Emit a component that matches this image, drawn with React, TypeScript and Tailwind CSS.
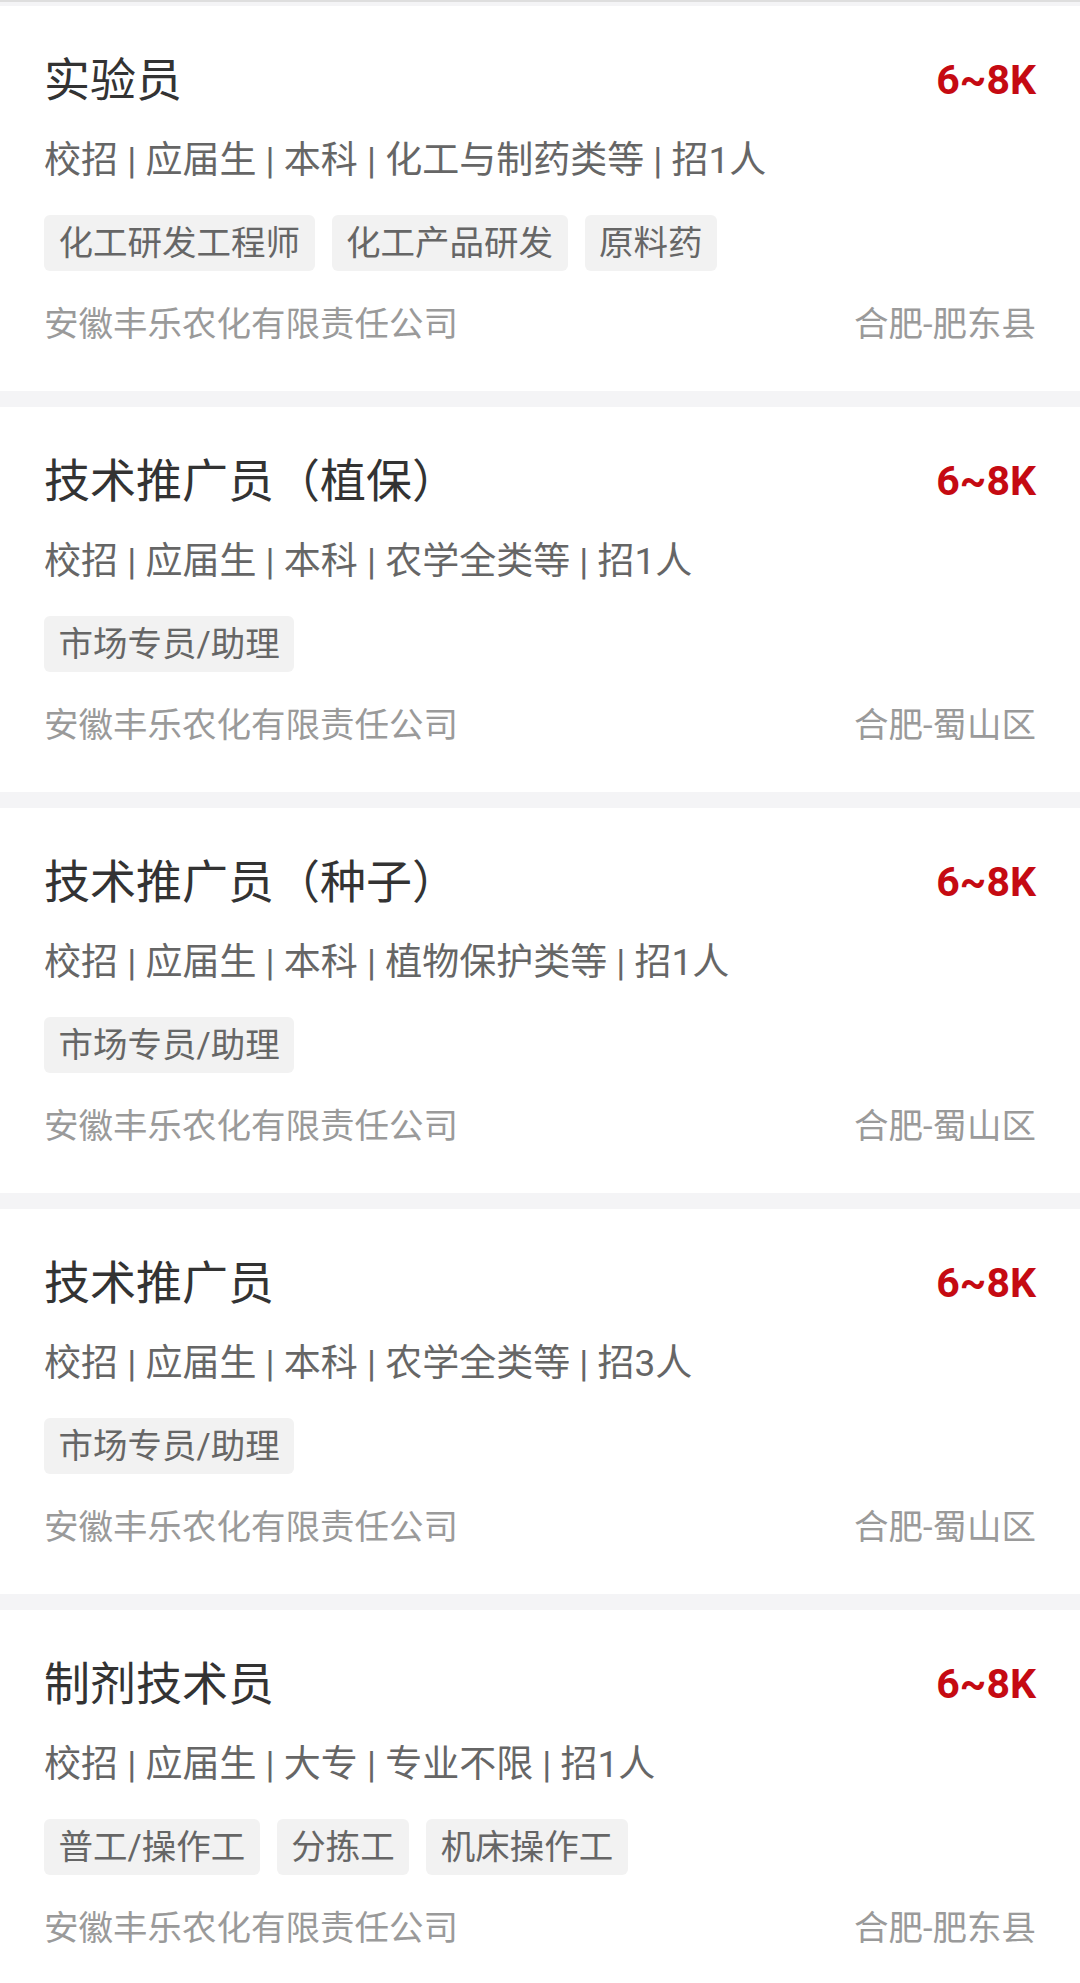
const jobs = [
  {
    title: "实验员",
    salary: "6~8K",
    meta: ["校招", "应届生", "本科", "化工与制药类等", "招1人"],
    tags: ["化工研发工程师", "化工产品研发", "原料药"],
    company: "安徽丰乐农化有限责任公司",
    location: "合肥-肥东县",
  },
  {
    title: "技术推广员（植保）",
    salary: "6~8K",
    meta: ["校招", "应届生", "本科", "农学全类等", "招1人"],
    tags: ["市场专员/助理"],
    company: "安徽丰乐农化有限责任公司",
    location: "合肥-蜀山区",
  },
  {
    title: "技术推广员（种子）",
    salary: "6~8K",
    meta: ["校招", "应届生", "本科", "植物保护类等", "招1人"],
    tags: ["市场专员/助理"],
    company: "安徽丰乐农化有限责任公司",
    location: "合肥-蜀山区",
  },
  {
    title: "技术推广员",
    salary: "6~8K",
    meta: ["校招", "应届生", "本科", "农学全类等", "招3人"],
    tags: ["市场专员/助理"],
    company: "安徽丰乐农化有限责任公司",
    location: "合肥-蜀山区",
  },
  {
    title: "制剂技术员",
    salary: "6~8K",
    meta: ["校招", "应届生", "大专", "专业不限", "招1人"],
    tags: ["普工/操作工", "分拣工", "机床操作工"],
    company: "安徽丰乐农化有限责任公司",
    location: "合肥-肥东县",
  },
];

const JobCard = ({ job }: { job: (typeof jobs)[number] }) => {
  return (
    <div className="bg-white px-[44px] pt-[44px] pb-[43px]">
      <div className="flex h-[60px] items-center justify-between">
        <h2 className="text-[46px] leading-[60px] font-normal text-[#333333]">
          {job.title}
        </h2>
        <span className="text-[41px] leading-[60px] font-bold text-[#c50a12]">
          {job.salary}
        </span>
      </div>
      <p className="mt-[26px] text-[37px] leading-[50px] text-[#666666] whitespace-nowrap">
        {job.meta.join(" | ")}
      </p>
      <div className="mt-[29px] flex gap-[17px]">
        {job.tags.map((tag) => (
          <span
            key={tag}
            className="h-[56px] rounded-[6px] bg-[#f2f2f2] px-[14.5px] text-[34.5px] leading-[56px] text-[#666666] whitespace-nowrap"
          >
            {tag}
          </span>
        ))}
      </div>
      <div className="mt-[29px] flex items-center justify-between text-[34.5px] leading-[48px] text-[#9a9a9a]">
        <span>{job.company}</span>
        <span>{job.location}</span>
      </div>
    </div>
  );
};

export default function App() {
  return (
    <div
      className="h-[1983px] w-[1080px] overflow-hidden bg-[#f4f4f6]"
      style={{ fontFamily: 'Roboto, "Noto Sans CJK SC", sans-serif' }}
    >
      <div className="h-[2px] bg-[#dedede]" />
      <div className="flex flex-col gap-[16px] pt-[4px]">
        {jobs.map((job, i) => (
          <JobCard key={i} job={job} />
        ))}
      </div>
    </div>
  );
}
